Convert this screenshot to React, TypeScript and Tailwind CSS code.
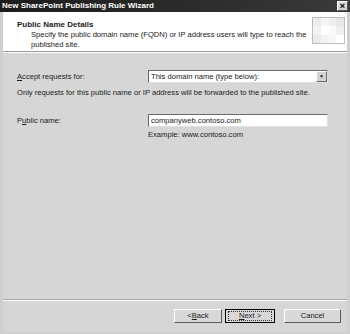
export default function App() {
  return (
    <div
      className="w-[350px] h-[334px] flex flex-col bg-[#d6d6d6] text-[7.6px] leading-[9px] text-[#1a1a1a] overflow-hidden"
      style={{ fontFamily: '"Liberation Sans", Arial, sans-serif' }}
    >
      {/* Title bar */}
      <div className="h-[12px] flex items-center justify-between bg-gradient-to-r from-[#1c1c1c] via-[#2a2a2a] to-[#3a3a3a] pl-[2px] pr-[2px]">
        <span className="text-white font-bold text-[8px] leading-[10px]">New SharePoint Publishing Rule Wizard</span>
        <div className="w-[11px] h-[10px] bg-[#d4d4d4] border border-t-white border-l-white border-b-[#555] border-r-[#555] flex items-center justify-center text-[9px] leading-none font-bold text-black">
          ×
        </div>
      </div>

      <div className="flex-1 flex flex-col border-x-[3px] border-b-[2px] border-[#cfcfcf]">
        {/* Header */}
        <div className="h-[40px] bg-white flex justify-between border-b border-[#9a9a9a] pl-[14px] pr-[2px] pt-[8px]">
          <div className="flex flex-col">
            <span className="font-bold text-[8px] leading-[10px]">Public Name Details</span>
            <span className="pl-[14px] leading-[10px]">
              Specify the public domain name (FQDN) or IP address users will type to reach the
              <br />
              published site.
            </span>
          </div>
          <div className="w-[33px] h-[27px] mt-[-3px] border border-[#bdbdbd] bg-gradient-to-br from-[#f0f0f0] via-white to-[#e6e6e6] grid grid-cols-4 grid-rows-3">
            <div className="bg-[#ececec]" />
            <div className="bg-[#f6f6f6]" />
            <div className="bg-[#efefef]" />
            <div className="bg-[#e8e8e8]" />
            <div className="bg-[#f2f2f2]" />
            <div className="bg-white" />
            <div className="bg-[#fafafa]" />
            <div className="bg-[#efefef]" />
            <div className="bg-[#eaeaea]" />
            <div className="bg-[#f4f4f4]" />
            <div className="bg-[#f8f8f8]" />
            <div className="bg-white" />
          </div>
        </div>
        <div className="h-px bg-white" />

        {/* Body */}
        <div className="flex-1 flex flex-col pl-[14px] pr-[19px] pt-[17px]">
          <div className="flex items-center">
            <span className="w-[131px]">
              <u>A</u>ccept requests for:
            </span>
            <div className="flex-1 h-[13px] bg-white border border-t-[#6a6a6a] border-l-[#6a6a6a] border-b-[#e0e0e0] border-r-[#e0e0e0] flex items-center">
              <span className="flex-1 pl-[2px]">This domain name (type below):</span>
              <div className="w-[11px] h-[11px] bg-[#d4d4d4] border border-t-white border-l-white border-b-[#6a6a6a] border-r-[#6a6a6a] flex items-center justify-center text-[5px] leading-none">
                ▼
              </div>
            </div>
          </div>
          <div className="mt-[5px]">Only requests for this public name or IP address will be forwarded to the published site.</div>
          <div className="flex items-center mt-[17px]">
            <span className="w-[131px]">
              P<u>u</u>blic name:
            </span>
            <div className="flex-1 h-[13px] bg-white border border-t-[#6a6a6a] border-l-[#6a6a6a] border-b-[#e0e0e0] border-r-[#e0e0e0] flex items-center pl-[2px]">
              companyweb.contoso.com
            </div>
          </div>
          <div className="pl-[131px] mt-[3px]">Example: www.contoso.com</div>
        </div>

        {/* Footer */}
        <div className="h-px bg-[#a8a8a8]" />
        <div className="h-px bg-white" />
        <div className="h-[31px] flex items-center justify-end gap-[3px] pr-[6px] pb-[2px]">
          <div className="w-[48px] h-[14px] bg-[#d8d8d8] border border-t-white border-l-white border-b-[#5a5a5a] border-r-[#5a5a5a] flex items-center justify-center">
            &lt; <u>B</u>ack
          </div>
          <div className="w-[50px] h-[14px] bg-[#d8d8d8] border border-black flex items-center justify-center mr-[6px]">
            <div className="w-[44px] h-[10px] border border-dotted border-[#333] flex items-center justify-center">
              <u>N</u>ext &gt;
            </div>
          </div>
          <div className="w-[57px] h-[14px] bg-[#d8d8d8] border border-t-white border-l-white border-b-[#5a5a5a] border-r-[#5a5a5a] flex items-center justify-center">
            Cancel
          </div>
        </div>
      </div>
    </div>
  );
}
